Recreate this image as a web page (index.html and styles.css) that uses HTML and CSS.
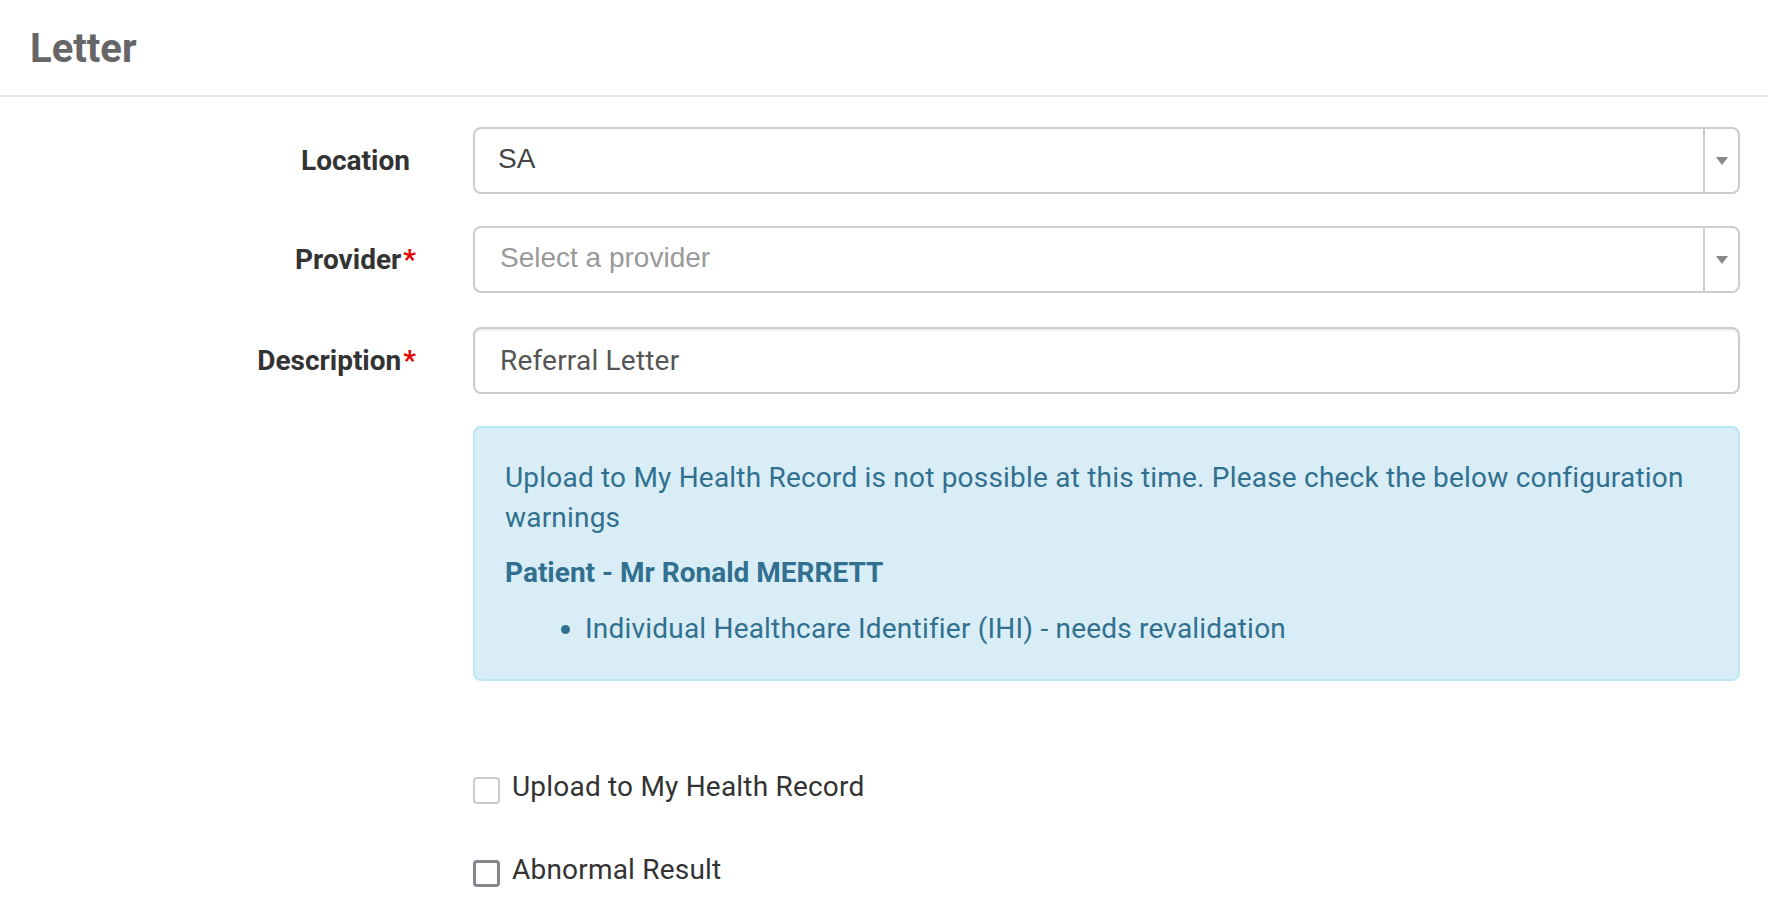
FILE: index.html
```html
<!DOCTYPE html>
<html lang="en">
<head>
<meta charset="utf-8">
<title>Letter</title>
<link rel="stylesheet" href="styles.css">
</head>
<body>
<header class="page-header">
  <h1 class="page-title">Letter</h1>
</header>
<form class="form">
  <div class="row row-location">
    <label class="field-label">Location</label>
    <div class="select">
      <span class="select-value">SA</span>
      <span class="select-arrow"><b class="caret"></b></span>
    </div>
  </div>
  <div class="row row-provider">
    <label class="field-label">Provider<span class="req">*</span></label>
    <div class="select">
      <span class="select-placeholder">Select a provider</span>
      <span class="select-arrow"><b class="caret"></b></span>
    </div>
  </div>
  <div class="row row-description">
    <label class="field-label">Description<span class="req">*</span></label>
    <div class="text-input">Referral Letter</div>
  </div>
  <div class="row row-alert">
    <div></div>
    <div class="alert">
      <p class="alert-msg">Upload to My Health Record is not possible at this time. Please check the below configuration warnings</p>
      <p class="alert-head">Patient - Mr Ronald MERRETT</p>
      <ul class="alert-list">
        <li>Individual Healthcare Identifier (IHI) - needs revalidation</li>
      </ul>
    </div>
  </div>
  <div class="row row-check row-check-first">
    <div></div>
    <label class="check"><span class="box box-disabled"></span><span class="check-text">Upload to My Health Record</span></label>
  </div>
  <div class="row row-check">
    <div></div>
    <label class="check"><span class="box"></span><span class="check-text">Abnormal Result</span></label>
  </div>
</form>
</body>
</html>
```

FILE: styles.css
```css
* { box-sizing: border-box; }

html, body {
  margin: 0;
  padding: 0;
  background: #fff;
}

body {
  font-family: Roboto, "Liberation Sans", sans-serif;
  font-size: 28px;
  line-height: 40px;
  letter-spacing: 0.2px;
  color: #333;
}

.page-header {
  height: 97px;
  border-bottom: 2px solid #e5e5e5;
  padding: 29px 0 0 30px;
}

.page-title {
  margin: 0;
  font-family: Roboto, sans-serif;
  font-weight: 700;
  font-size: 40px;
  line-height: 40px;
  letter-spacing: 0;
  color: #666;
}

.form {
  padding: 30px 28px 0 0;
}

.row {
  display: grid;
  grid-template-columns: 410px 1fr;
  column-gap: 63px;
}

.row-location { margin-bottom: 32px; }
.row-provider { margin-bottom: 34px; }
.row-description { margin-bottom: 32px; }
.row-alert { margin-bottom: 86px; }
.row-check-first { margin-bottom: 43px; }

.field-label {
  text-align: right;
  font-weight: 700;
  letter-spacing: 0;
  height: 67px;
  line-height: 67px;
  color: #333;
}

.req {
  color: #e60000;
  margin-right: -6px;
  margin-left: 2px;
}

.select,
.text-input {
  height: 67px;
  border: 2px solid #ccc;
  border-radius: 8px;
  display: flex;
  align-items: center;
  background: #fff;
}

.text-input {
  padding-left: 25px;
  color: #555;
  box-shadow: inset 0 2px 2px rgba(0, 0, 0, 0.075);
}

.select-value,
.select-placeholder {
  font-family: "Liberation Sans", Arial, sans-serif;
  font-size: 28px;
  letter-spacing: 0;
  padding-left: 23px;
  padding-bottom: 4px;
  flex: 1;
}

.select-value { color: #444; }

.select-placeholder {
  color: #999;
  padding-left: 25px;
}

.select-arrow {
  width: 35px;
  height: 100%;
  border-left: 2px solid #ccc;
  display: flex;
  align-items: center;
  justify-content: center;
}

.caret {
  width: 0;
  height: 0;
  border-left: 6px solid transparent;
  border-right: 6px solid transparent;
  border-top: 8px solid #888;
}

.alert {
  background: #d9edf7;
  border: 2px solid #bce8f1;
  border-radius: 8px;
  color: #31708f;
  padding: 30px 30px 30px 30px;
}

.alert-msg {
  margin: 0 0 15px;
}

.alert-head {
  margin: 0 0 16px;
  font-weight: 700;
  letter-spacing: 0;
}

.alert-list {
  margin: 0;
  padding-left: 80px;
}

.check {
  display: flex;
  align-items: flex-start;
  gap: 12px;
}

.box {
  width: 27px;
  height: 27px;
  margin-top: 10px;
  border: 3px solid #85858e;
  border-radius: 4px;
  background: #fff;
  flex: none;
}

.box-disabled {
  border: 2px solid #cacacf;
}

.check-text {
  color: #333;
}
```
